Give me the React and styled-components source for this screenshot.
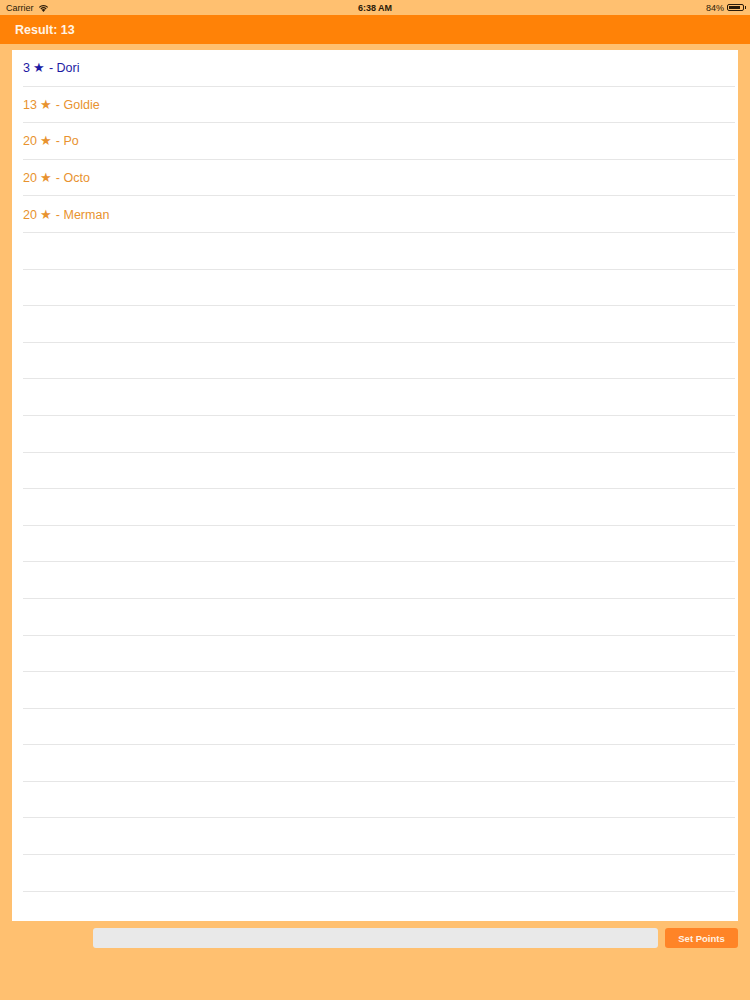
import React from "react";
import styled, { createGlobalStyle } from "styled-components";

const GlobalStyle = createGlobalStyle`
  html, body {
    margin: 0;
    padding: 0;
    background: #ffc070;
  }
  body {
    font-family: "Liberation Sans", Arial, sans-serif;
  }
`;

const Screen = styled.div`
  width: 750px;
  height: 1000px;
  background: #ffc070;
  display: flex;
  flex-direction: column;
`;

const StatusBar = styled.div`
  height: 15px;
  display: grid;
  grid-template-columns: 1fr auto 1fr;
  align-items: center;
  padding: 0 6px;
  font-size: 9px;
  color: #2a1a08;
`;

const StatusLeft = styled.div`
  display: flex;
  align-items: center;
  gap: 4px;
`;

const StatusCenter = styled.div`
  font-weight: bold;
`;

const StatusRight = styled.div`
  display: flex;
  align-items: center;
  justify-content: flex-end;
  gap: 3px;
`;

const Battery = styled.div`
  width: 17px;
  height: 7px;
  border: 1px solid #2a1a08;
  border-radius: 2px;
  padding: 1px;
  box-sizing: border-box;
  position: relative;
  &::before {
    content: "";
    display: block;
    width: 84%;
    height: 100%;
    background: #2a1a08;
  }
  &::after {
    content: "";
    position: absolute;
    right: -3px;
    top: 1px;
    width: 1px;
    height: 3px;
    background: #2a1a08;
  }
`;

const Header = styled.div`
  height: 29px;
  background: #ff8207;
  display: flex;
  align-items: center;
  padding-left: 15px;
  color: #fff4e6;
  font-weight: bold;
  font-size: 12.5px;
`;

const ListCard = styled.div`
  margin: 6px 12px 0 12px;
  height: 871px;
  background: #fff;
  padding-left: 11px;
  padding-right: 3px;
  box-sizing: border-box;
  overflow: hidden;
`;

const Row = styled.div`
  height: 36.6px;
  box-sizing: border-box;
  border-bottom: 1px solid #e6e6e6;
  display: flex;
  align-items: center;
  font-size: 12.5px;
  color: ${(p) => (p.$active ? "#1d1aa3" : "#e8922e")};
`;

const Footer = styled.div`
  display: flex;
  align-items: center;
  gap: 7px;
  padding: 7px 12px 0 93px;
`;

const Input = styled.div`
  flex: 1;
  height: 20px;
  background: #e9e9e9;
  border-radius: 3px;
`;

const Button = styled.button`
  width: 73px;
  height: 20px;
  border: none;
  border-radius: 3px;
  background: #ff8427;
  color: #fff1e2;
  font-family: "Liberation Sans", Arial, sans-serif;
  font-weight: bold;
  font-size: 9.5px;
  padding: 0;
`;

const WifiIcon = () => (
  <svg width="11" height="8" viewBox="0 0 11 8">
    <path d="M5.5 8 L3.6 5.8 A3 3 0 0 1 7.4 5.8 Z" fill="#2a1a08" />
    <path d="M2.4 4.5 A4.6 4.6 0 0 1 8.6 4.5 L7.8 5.4 A3.4 3.4 0 0 0 3.2 5.4 Z" fill="#2a1a08" />
    <path d="M0.9 2.9 A6.8 6.8 0 0 1 10.1 2.9 L9.3 3.8 A5.6 5.6 0 0 0 1.7 3.8 Z" fill="#2a1a08" />
  </svg>
);

const players = [
  { points: 3, name: "Dori", active: true },
  { points: 13, name: "Goldie" },
  { points: 20, name: "Po" },
  { points: 20, name: "Octo" },
  { points: 20, name: "Merman" },
];

export default function App() {
  const empty = Array.from({ length: 18 });
  return (
    <Screen>
      <GlobalStyle />
      <StatusBar>
        <StatusLeft>
          Carrier <WifiIcon />
        </StatusLeft>
        <StatusCenter>6:38 AM</StatusCenter>
        <StatusRight>
          84% <Battery />
        </StatusRight>
      </StatusBar>
      <Header>Result: 13</Header>
      <ListCard>
        {players.map((p) => (
          <Row key={p.name} $active={p.active}>
            {p.points} ★ - {p.name}
          </Row>
        ))}
        {empty.map((_, i) => (
          <Row key={i} />
        ))}
      </ListCard>
      <Footer>
        <Input />
        <Button>Set Points</Button>
      </Footer>
    </Screen>
  );
}
